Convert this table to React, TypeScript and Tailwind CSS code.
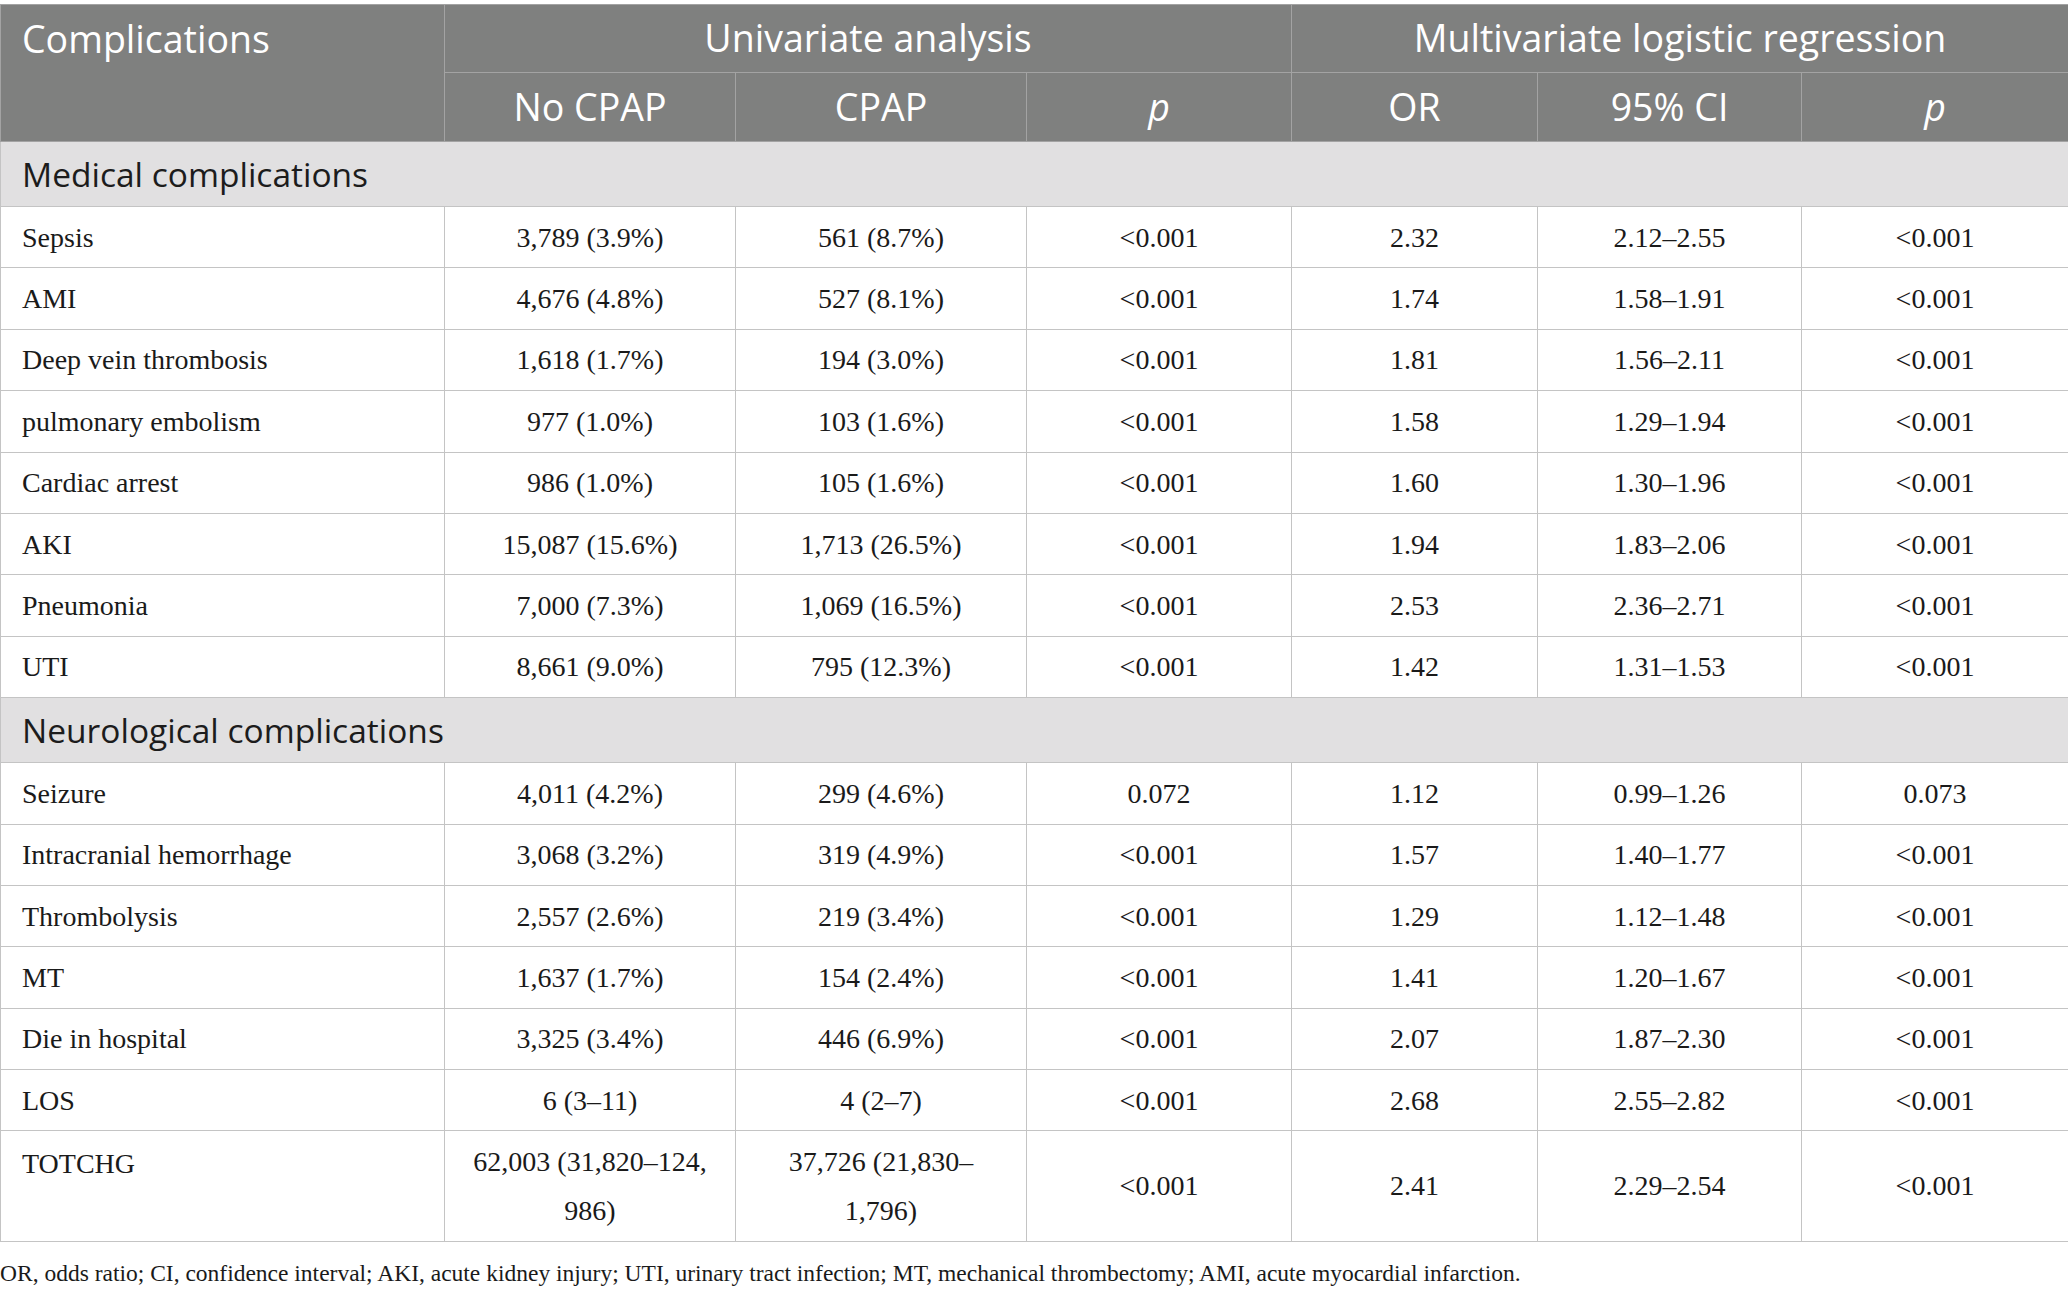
const medical: string[][] = [
  ['Sepsis', '3,789 (3.9%)', '561 (8.7%)', '<0.001', '2.32', '2.12–2.55', '<0.001'],
  ['AMI', '4,676 (4.8%)', '527 (8.1%)', '<0.001', '1.74', '1.58–1.91', '<0.001'],
  ['Deep vein thrombosis', '1,618 (1.7%)', '194 (3.0%)', '<0.001', '1.81', '1.56–2.11', '<0.001'],
  ['pulmonary embolism', '977 (1.0%)', '103 (1.6%)', '<0.001', '1.58', '1.29–1.94', '<0.001'],
  ['Cardiac arrest', '986 (1.0%)', '105 (1.6%)', '<0.001', '1.60', '1.30–1.96', '<0.001'],
  ['AKI', '15,087 (15.6%)', '1,713 (26.5%)', '<0.001', '1.94', '1.83–2.06', '<0.001'],
  ['Pneumonia', '7,000 (7.3%)', '1,069 (16.5%)', '<0.001', '2.53', '2.36–2.71', '<0.001'],
  ['UTI', '8,661 (9.0%)', '795 (12.3%)', '<0.001', '1.42', '1.31–1.53', '<0.001'],
];

const neuro: string[][] = [
  ['Seizure', '4,011 (4.2%)', '299 (4.6%)', '0.072', '1.12', '0.99–1.26', '0.073'],
  ['Intracranial hemorrhage', '3,068 (3.2%)', '319 (4.9%)', '<0.001', '1.57', '1.40–1.77', '<0.001'],
  ['Thrombolysis', '2,557 (2.6%)', '219 (3.4%)', '<0.001', '1.29', '1.12–1.48', '<0.001'],
  ['MT', '1,637 (1.7%)', '154 (2.4%)', '<0.001', '1.41', '1.20–1.67', '<0.001'],
  ['Die in hospital', '3,325 (3.4%)', '446 (6.9%)', '<0.001', '2.07', '1.87–2.30', '<0.001'],
  ['LOS', '6 (3–11)', '4 (2–7)', '<0.001', '2.68', '2.55–2.82', '<0.001'],
];

const sans = "font-['Open_Sans',sans-serif]";
const serif = "font-['Liberation_Serif',serif]";

function DataRow({ row }: { row: string[] }) {
  return (
    <tr className="h-[61.4px]">
      {row.map((cell, i) => (
        <td
          key={i}
          className={
            i === 0
              ? 'border border-[#c4c4c4] pl-[21px] pr-2 text-left align-middle leading-[47px]'
              : 'border border-[#c4c4c4] px-2 text-center align-middle leading-[47px]'
          }
        >
          {cell}
        </td>
      ))}
    </tr>
  );
}

function SectionRow({ label }: { label: string }) {
  return (
    <tr className="h-[65px]">
      <td
        colSpan={7}
        className={`border border-[#c4c4c4] bg-[#e1e0e1] pl-[21px] text-left align-middle text-[33.5px] text-[#1c1c1c] ${sans}`}
      >
        {label}
      </td>
    </tr>
  );
}

export default function App() {
  const head = 'border border-[#a3a3a3] bg-[#7f807f] text-white font-normal';
  return (
    <div className="w-[2068px] bg-white pt-[4px]">
      <table className={`w-[2068px] table-fixed border-collapse text-[28px] text-[#1a1a1a] ${serif}`}>
        <colgroup>
          <col className="w-[444px]" />
          <col className="w-[291px]" />
          <col className="w-[291px]" />
          <col className="w-[265px]" />
          <col className="w-[246px]" />
          <col className="w-[264px]" />
          <col className="w-[267px]" />
        </colgroup>
        <thead className={`text-[37.5px] ${sans}`}>
          <tr className="h-[68px]">
            <th rowSpan={2} className={`${head} pl-[21px] pt-[6px] text-left align-top`}>
              Complications
            </th>
            <th colSpan={3} className={`${head} text-center align-middle`}>
              Univariate analysis
            </th>
            <th colSpan={3} className={`${head} text-center align-middle`}>
              Multivariate logistic regression
            </th>
          </tr>
          <tr className="h-[69px]">
            <th className={`${head} text-center align-middle`}>No CPAP</th>
            <th className={`${head} text-center align-middle`}>CPAP</th>
            <th className={`${head} text-center align-middle italic`}>p</th>
            <th className={`${head} text-center align-middle`}>OR</th>
            <th className={`${head} text-center align-middle`}>95% CI</th>
            <th className={`${head} text-center align-middle italic`}>p</th>
          </tr>
        </thead>
        <tbody>
          <SectionRow label="Medical complications" />
          {medical.map((r) => (
            <DataRow key={r[0]} row={r} />
          ))}
          <SectionRow label="Neurological complications" />
          {neuro.map((r) => (
            <DataRow key={r[0]} row={r} />
          ))}
          <tr className="h-[111px]">
            <td className="border border-[#c4c4c4] pl-[21px] pt-[8px] text-left align-top leading-[49px]">
              TOTCHG
            </td>
            <td className="border border-[#c4c4c4] px-2 text-center align-middle leading-[49px]">
              62,003 (31,820–124,
              <br />
              986)
            </td>
            <td className="border border-[#c4c4c4] px-2 text-center align-middle leading-[49px]">
              37,726 (21,830–
              <br />
              1,796)
            </td>
            <td className="border border-[#c4c4c4] px-2 text-center align-middle">&lt;0.001</td>
            <td className="border border-[#c4c4c4] px-2 text-center align-middle">2.41</td>
            <td className="border border-[#c4c4c4] px-2 text-center align-middle">2.29–2.54</td>
            <td className="border border-[#c4c4c4] px-2 text-center align-middle">&lt;0.001</td>
          </tr>
        </tbody>
      </table>
      <p className={`mt-[16px] text-[23.5px] leading-[30px] text-[#1a1a1a] ${serif}`}>
        OR, odds ratio; CI, confidence interval; AKI, acute kidney injury; UTI, urinary tract infection; MT,
        mechanical thrombectomy; AMI, acute myocardial infarction.
      </p>
    </div>
  );
}
